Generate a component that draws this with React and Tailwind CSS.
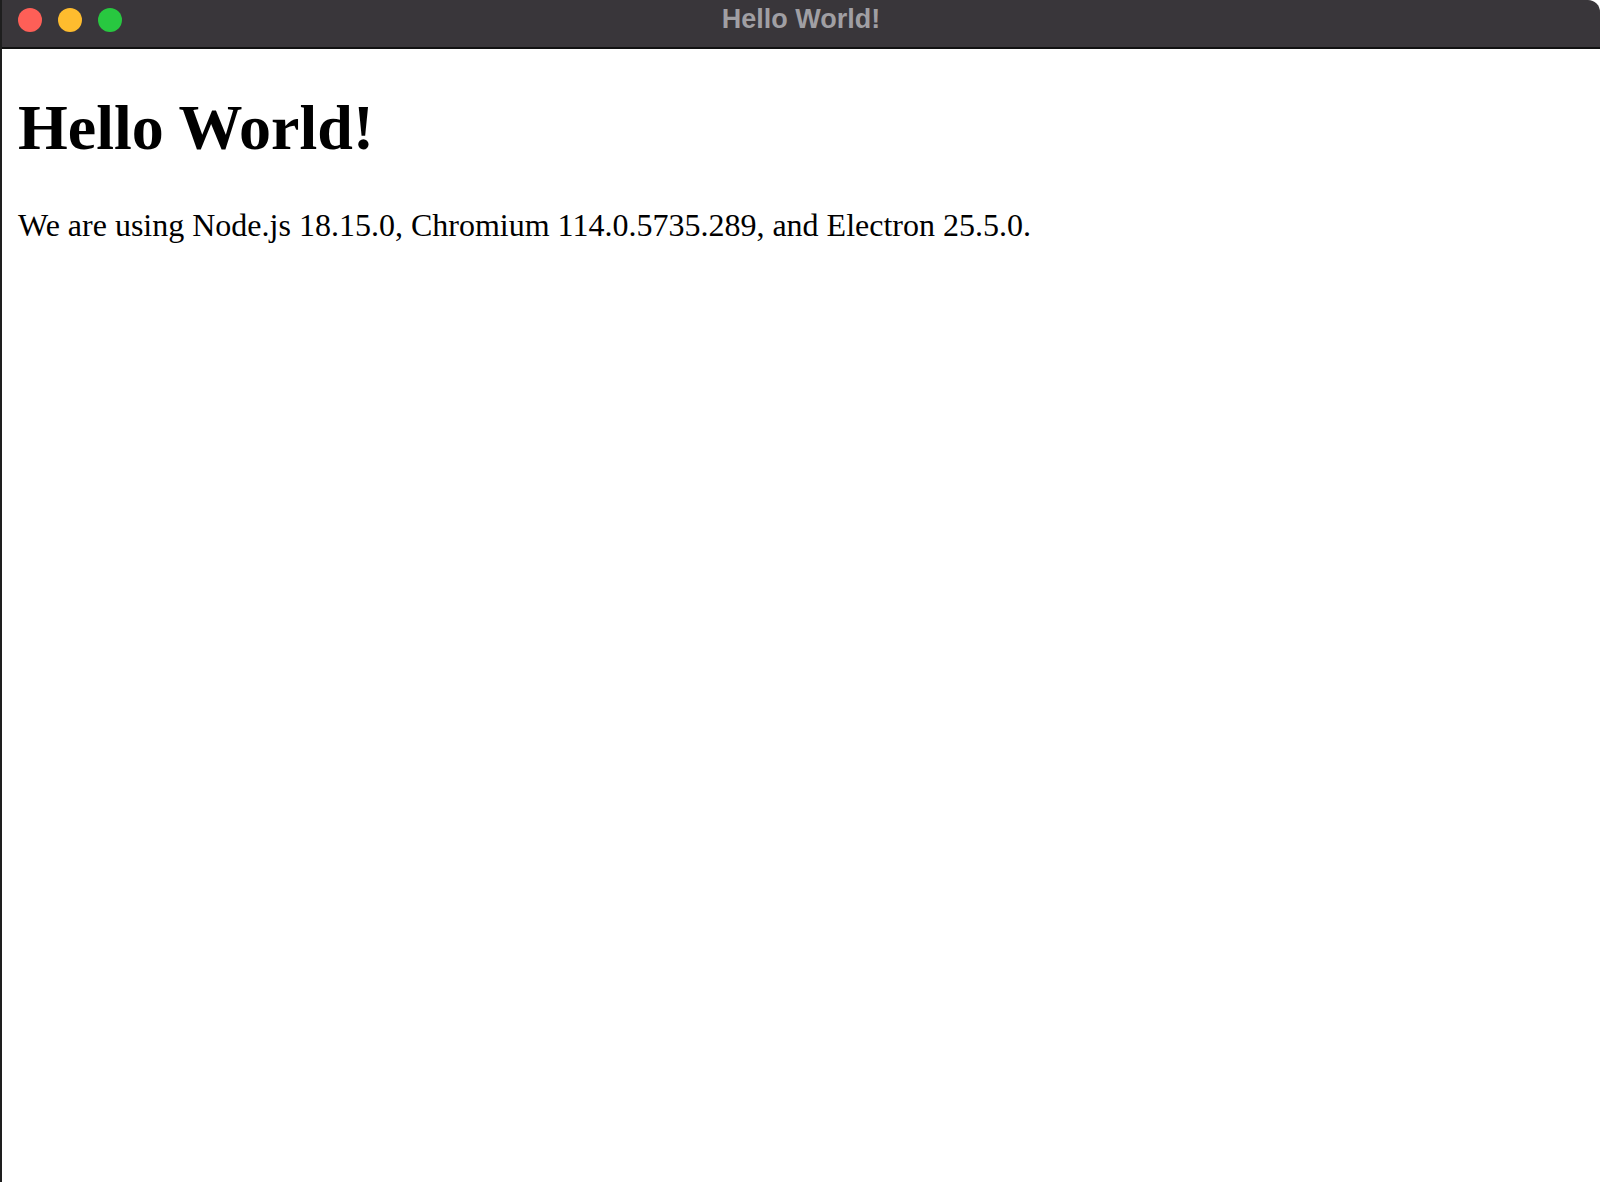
import React from 'react';

const TrafficLights = () => (
  <div className="flex items-center gap-[16px] pl-[16px] pt-[8px]">
    <span className="block h-[24px] w-[24px] rounded-full bg-[#fe5f57]"></span>
    <span className="block h-[24px] w-[24px] rounded-full bg-[#febc2e]"></span>
    <span className="block h-[24px] w-[24px] rounded-full bg-[#28c840]"></span>
  </div>
);

const App = () => {
  return (
    <div className="flex h-[1182px] w-[1600px] flex-col overflow-hidden border-l-2 border-[#1e1e1e] bg-white">
      {/* Title bar */}
      <div className="relative flex h-[49px] shrink-0 items-start rounded-tr-[12px] border-b-2 border-[#111] bg-[#39363a]">
        <TrafficLights />
        <div className="absolute inset-x-0 top-0 flex h-[38px] items-center justify-center">
          <span className="font-['Liberation_Sans',Arial,sans-serif] text-[27px] font-bold text-[#a09fa3]">
            Hello World!
          </span>
        </div>
      </div>

      {/* Page content */}
      <div className="flex-1 px-[16px] font-['Liberation_Serif','Times_New_Roman',serif] text-black">
        <h1 className="mt-[42px] mb-[42px] text-[64px] font-bold leading-[74px]">Hello World!</h1>
        <p className="text-[32px] leading-[37px]">
          We are using Node.js 18.15.0, Chromium 114.0.5735.289, and Electron 25.5.0.
        </p>
      </div>
    </div>
  );
};

export default App;
